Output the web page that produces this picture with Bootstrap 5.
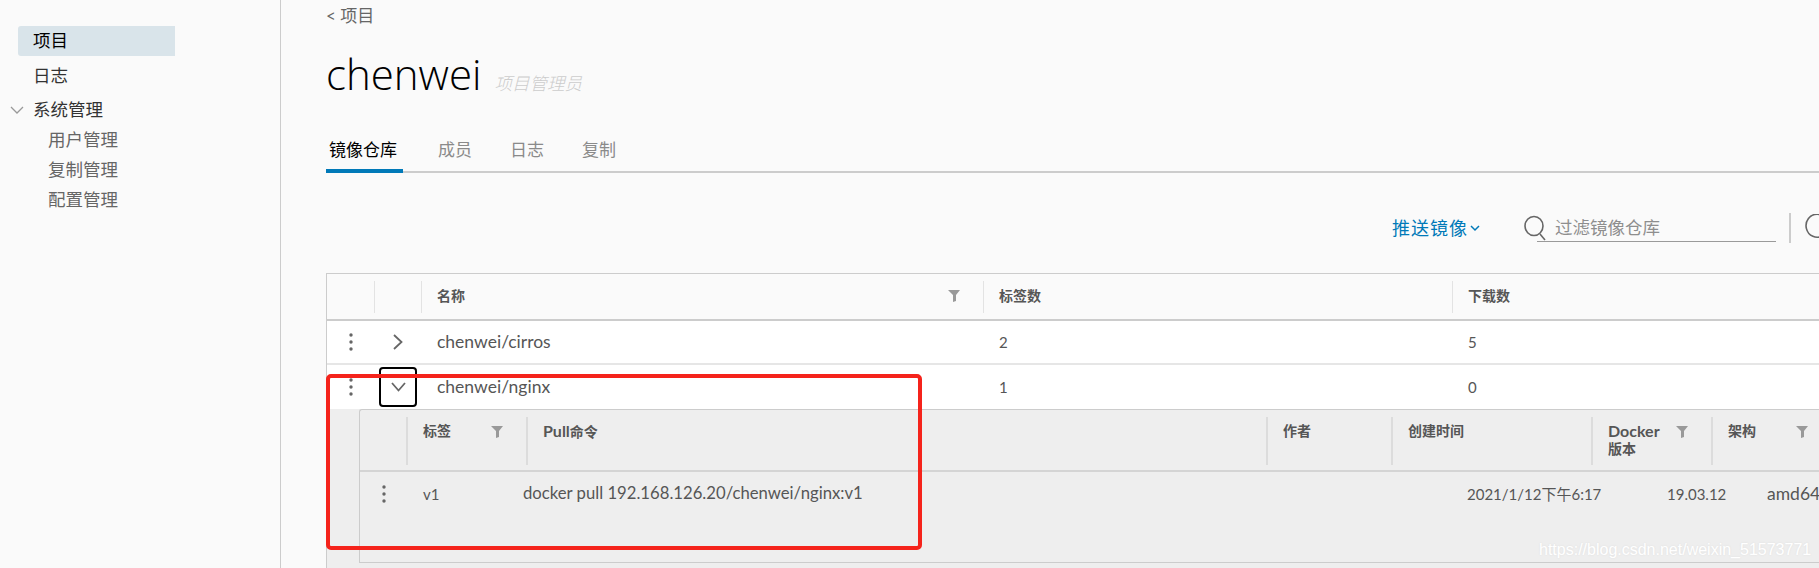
<!DOCTYPE html>
<html lang="zh-CN">
<head>
  <meta charset="UTF-8" />
  <title>chenwei - Harbor</title>
  <link href="https://cdn.jsdelivr.net/npm/bootstrap@5.3.2/dist/css/bootstrap.min.css" rel="stylesheet">
  <style>
    :root {
      --line: #ccc;
      --blue: #0079b8;
      --grey-bg: #eee;
      --ink: #565656;
    }
    html, body { height: 568px; overflow: hidden; }
    body {
      background: #fafafa;
      color: var(--ink);
      font-family: "Lato", "Noto Sans CJK SC", sans-serif;
      font-size: 15px;
      position: relative;
    }

    /* SIDEBAR */
    .side-col { width: 281px; height: 568px; border-right: 1px solid var(--line); padding-top: 26px; flex: none; }
    .side-link { display: block; height: 30px; line-height: 30px; margin-left: 18px; width: 157px; padding-left: 15px; font-size: 17.5px; color: #333; text-decoration: none; }
    .side-link.on { background: #d9e4ea; border-radius: 3px 0 0 3px; color: #000; }
    .side-gap { margin-top: 5px; }
    .side-group { position: relative; margin-top: 4px; }
    .side-group svg { position: absolute; left: 10px; top: 11px; }
    .side-sub { display: block; height: 30px; line-height: 30px; margin-left: 48px; font-size: 17.5px; color: #666; text-decoration: none; }

    /* HEADER + TABS */
    .main-col { width: 1538px; padding-left: 45px; flex: none; overflow: hidden; }
    .back-link { height: 32px; line-height: 32px; font-size: 17px; color: #666; text-decoration: none; display: block; }
    .title-row { height: 62px; margin-top: 11px; margin-bottom: 28px; }
    .title-name { font-family: "Open Sans", sans-serif; font-weight: 300; font-size: 42px; line-height: 62px; color: #000; margin: 0; }
    .title-role { font-size: 17.5px; font-style: italic; color: #ccc; margin-left: 13px; padding-top: 20px; font-weight: 300; }
    .tab-row { height: 40px; border-bottom: 2px solid var(--line); gap: 32px; padding-top: 11px; width: 1600px; }
    .tab-row .nav-link { padding: 0 3px; height: 29px; line-height: 12px; font-size: 17px; color: #8a8a8a; border-radius: 0; }
    .tab-row .nav-link.active { color: #000; width: 77px; border-bottom: 4px solid var(--blue); }

    /* ACTION BAR */
    .act-row { height: 100px; padding-top: 41px; width: 1493px; }
    .act-push { display: flex; align-items: center; flex: none; width: 91px; color: var(--blue); font-size: 18px; padding: 0; border: 0; line-height: 28px; margin-left: 1066px; text-decoration: none; letter-spacing: 1px; white-space: nowrap; }
    .act-push svg { margin-left: 2px; flex: none; }
    .act-search { position: relative; margin-left: 41px; width: 252px; height: 30px; flex: none; }
    .act-search svg { position: absolute; left: 0; top: 1px; }
    .act-input { position: absolute; left: 13px; top: 0; width: 239px; height: 28px; padding: 0 0 0 18px; background: transparent; border: 0; border-bottom: 1px solid #9a9a9a; border-radius: 0; font-size: 17.5px; color: #888; box-shadow: none; }
    .act-input::placeholder { color: #8e8e8e; opacity: 1; }
    .act-sep { width: 2px; height: 30px; background: var(--line); margin-left: 13px; margin-top: -1px; flex: none; }
    .act-refresh { margin-left: 14px; flex: none; }

    /* DATAGRID */
    .grid-wrap { width: 1600px; border-left: 1px solid var(--line); border-top: 1px solid var(--line); height: 295px; background: var(--grey-bg); }
    .grid-head { height: 47px; background: #fafafa; border-bottom: 2px solid var(--line); padding-top: 7px; font-weight: 700; font-size: 14px; }
    .head-cell { height: 32px; border-left: 1px solid #e3e3e3; padding-left: 15px; line-height: 30px; flex: none; position: relative; }
    .grid-row { height: 44px; background: #fff; border-bottom: 2px solid #e6e6e6; align-items: center; font-size: 15px; }
    .grid-row.last { border-bottom: 0; }
    .kebab-cell { flex: none; width: 47px; display: flex; justify-content: center; }
    .caret-cell { flex: none; width: 47px; display: flex; justify-content: center; align-items: center; height: 40px; }
    .caret-cell.focused { border: 2px solid #000; border-radius: 4px; width: 38px; margin: 0 4px 0 5px; }
    .body-cell { flex: none; padding-left: 16px; }
    .repo-name { font-size: 17.5px; }
    .w-a { width: 47px; }
    .w-name { width: 562px; }
    .w-tags { width: 469px; }

    .sub-wrap { margin-left: 32px; border-left: 1px solid var(--line); border-top: 1px solid var(--line); border-top-left-radius: 3px; height: 154px; border-bottom: 1px solid var(--line); }
    .sub-head { height: 62px; border-bottom: 2px solid #d4d4d4; padding-top: 7px; font-weight: 700; font-size: 14px; line-height: 1.2; }
    .sub-cell { height: 48px; border-left: 2px solid #dcdcdc; padding: 5px 0 0 15px; flex: none; position: relative; line-height: 17px; }
    .sub-gutter { width: 46px; flex: none; }
    .latin-head { font-size: 16px; }
    .funnel { position: absolute; top: 9px; }
    .sub-row { height: 44px; align-items: center; font-size: 15px; }
    .sub-row > div { flex: none; }
    .pull-cmd { font-size: 16.7px; }
    .arch-val { font-size: 17.5px; }

    /* annotation and watermark painted over the screenshot */
    .red-mark { position: absolute; left: 326px; top: 374px; width: 596px; height: 176px; border: 4px solid #f5231b; border-radius: 5px; pointer-events: none; }
    .water-mark { position: absolute; left: 1539px; top: 539px; font-family: "Liberation Sans", sans-serif; font-size: 16px; color: #fff; text-shadow: 0 0 2px #dcdcdc; line-height: 22px; }
  </style>
</head>
<body>

  <svg width="0" height="0" class="d-block">
    <defs>
      <g id="dots"><circle cx="3" cy="3" r="1.7"/><circle cx="3" cy="10" r="1.7"/><circle cx="3" cy="17" r="1.7"/></g>
      <path id="tri" d="M0 0H12L8 5V11L5 12V5Z"/>
    </defs>
  </svg>

  <div class="d-flex">
    <!-- Sidebar -->
    <nav class="side-col">
      <a class="side-link on" href="#">项目</a>
      <a class="side-link side-gap" href="#">日志</a>
      <div class="side-group">
        <svg width="14" height="9" viewBox="0 0 14 9" fill="none" stroke="#999" stroke-width="1.3"><path d="M1 1l6 6 6-6"/></svg>
        <a class="side-link" href="#">系统管理</a>
      </div>
      <a class="side-sub" href="#">用户管理</a>
      <a class="side-sub" href="#">复制管理</a>
      <a class="side-sub" href="#">配置管理</a>
    </nav>

    <main class="main-col">
      <a class="back-link" href="#">&lt; 项目</a>

      <div class="title-row d-flex align-items-center">
        <h1 class="title-name">chenwei</h1>
        <span class="title-role">项目管理员</span>
      </div>

      <!-- Tabs -->
      <ul class="nav tab-row">
        <li class="nav-item"><a class="nav-link active" href="#">镜像仓库</a></li>
        <li class="nav-item"><a class="nav-link" href="#">成员</a></li>
        <li class="nav-item"><a class="nav-link" href="#">日志</a></li>
        <li class="nav-item"><a class="nav-link" href="#">复制</a></li>
      </ul>

      <!-- Actions -->
      <div class="act-row d-flex align-items-start">
        <a class="btn btn-link act-push" href="#">推送镜像<svg width="10" height="7" viewBox="0 0 10 7" fill="none" stroke="#0079b8" stroke-width="1.5"><path d="M1 1l4 4 4-4"/></svg></a>
        <div class="act-search">
          <svg width="24" height="27" viewBox="0 0 24 27" fill="none" stroke="#666" stroke-width="1.6"><ellipse cx="10" cy="11" rx="9" ry="9.5"/><path d="M16 19l5 6"/></svg>
          <input class="form-control act-input" type="text" placeholder="过滤镜像仓库">
        </div>
        <div class="act-sep"></div>
        <svg class="act-refresh" width="24" height="26" viewBox="0 0 24 26" fill="none" stroke="#666" stroke-width="1.6"><path d="M21 5A11 11.5 0 1 0 23 13"/><path d="M14 6h8V1" /></svg>
      </div>

      <!-- Datagrid -->
      <div class="grid-wrap">
        <div class="grid-head d-flex">
          <div class="w-a flex-none"></div>
          <div class="head-cell w-a p-0"></div>
          <div class="head-cell w-name">名称
            <svg class="funnel" style="left:526px" width="12" height="12" fill="#999"><use href="#tri"/></svg>
          </div>
          <div class="head-cell w-tags">标签数</div>
          <div class="head-cell">下载数</div>
        </div>

        <div class="grid-row d-flex">
          <div class="kebab-cell"><svg width="6" height="20" fill="#666"><use href="#dots"/></svg></div>
          <div class="caret-cell"><svg width="10" height="16" viewBox="0 0 10 16" fill="none" stroke="#666" stroke-width="1.8"><path d="M1 1l7.5 7-7.5 7"/></svg></div>
          <div class="body-cell w-name repo-name">chenwei/cirros</div>
          <div class="body-cell w-tags">2</div>
          <div class="body-cell">5</div>
        </div>

        <div class="grid-row last d-flex">
          <div class="kebab-cell"><svg width="6" height="20" fill="#666"><use href="#dots"/></svg></div>
          <div class="caret-cell focused"><svg width="15" height="10" viewBox="0 0 15 10" fill="none" stroke="#666" stroke-width="1.8"><path d="M1 1l6.5 7.5 6.5-7.5"/></svg></div>
          <div class="body-cell w-name repo-name">chenwei/nginx</div>
          <div class="body-cell w-tags">1</div>
          <div class="body-cell">0</div>
        </div>

        <!-- Expanded row -->
        <div class="sub-wrap">
          <div class="sub-head d-flex">
            <div class="sub-gutter"></div>
            <div class="sub-cell" style="width:120px">标签
              <svg class="funnel" style="left:83px" width="12" height="12" fill="#999"><use href="#tri"/></svg>
            </div>
            <div class="sub-cell" style="width:740px"><span class="latin-head">Pull</span>命令</div>
            <div class="sub-cell" style="width:125px">作者</div>
            <div class="sub-cell" style="width:200px">创建时间</div>
            <div class="sub-cell" style="width:120px"><span class="latin-head">Docker</span><br>版本
              <svg class="funnel" style="left:83px" width="12" height="12" fill="#999"><use href="#tri"/></svg>
            </div>
            <div class="sub-cell" style="width:110px">架构
              <svg class="funnel" style="left:83px" width="12" height="12" fill="#999"><use href="#tri"/></svg>
            </div>
          </div>
          <div class="sub-row d-flex">
            <div class="kebab-cell"><svg width="6" height="20" fill="#666"><use href="#dots"/></svg></div>
            <div style="width:116px;padding-left:16px">v1</div>
            <div class="pull-cmd" style="width:944px">docker pull 192.168.126.20/chenwei/nginx:v1</div>
            <div style="width:200px">2021/1/12下午6:17</div>
            <div style="width:100px">19.03.12</div>
            <div class="arch-val">amd64</div>
          </div>
        </div>
      </div>
    </main>
  </div>

  <div class="red-mark"></div>
  <div class="water-mark">https://blog.csdn.net/weixin_51573771</div>

  <script src="https://cdn.jsdelivr.net/npm/bootstrap@5.3.2/dist/js/bootstrap.bundle.min.js"></script>
</body>
</html>
